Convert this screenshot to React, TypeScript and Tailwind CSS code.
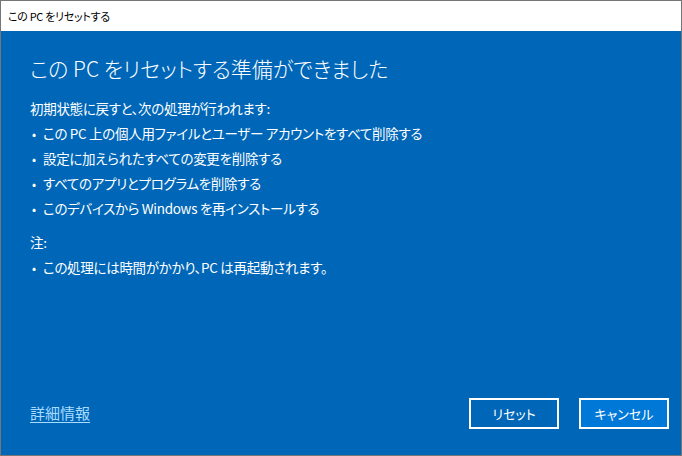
const jp = "font-['Noto_Sans_CJK_JP',sans-serif] [font-feature-settings:'palt']";

const actions = [
  'この PC 上の個人用ファイルとユーザー アカウントをすべて削除する',
  '設定に加えられたすべての変更を削除する',
  'すべてのアプリとプログラムを削除する',
  'このデバイスから Windows を再インストールする',
];

function Bullet({ text }: { text: string }) {
  return (
    <li className="flex h-[25px] items-center">
      <span className="w-[13px] pl-[2px] text-[12px]">•</span>
      <span>{text}</span>
    </li>
  );
}

export default function App() {
  return (
    <div className={`flex h-[456px] w-[682px] flex-col border border-[#767676] bg-[#0067b8] text-white ${jp}`}>
      {/* title bar */}
      <div className="flex h-[30px] shrink-0 items-center bg-white pl-[7px] text-[11px] tracking-[-0.3px] text-black">
        この PC をリセットする
      </div>

      <div className="flex flex-1 flex-col px-[29px]">
        <h1 className="mt-[20px] h-[34px] text-[21px] leading-[34px] font-light">
          この PC をリセットする準備ができました
        </h1>

        <div className="mt-[11px] text-[13.5px] tracking-[-0.3px]">
          <p className="flex h-[25px] items-center">初期状態に戻すと、次の処理が行われます:</p>
          <ul>
            {actions.map((a) => (
              <Bullet key={a} text={a} />
            ))}
          </ul>

          <p className="mt-[9px] flex h-[25px] items-center">注:</p>
          <ul>
            <Bullet text="この処理には時間がかかり、PC は再起動されます。" />
          </ul>
        </div>

        <div className="mt-auto mb-[26px] flex items-center justify-between">
          <a href="#" className="text-[15px] text-[#a8dcff] underline underline-offset-[3px]">
            詳細情報
          </a>
          <div className="-mr-[17px] flex gap-[20px]">
            <button className="flex h-[31px] w-[90px] items-center justify-center border-2 border-white bg-[#0067b8] text-[13px]">
              リセット
            </button>
            <button className="flex h-[31px] w-[90px] items-center justify-center border-2 border-white bg-[#0078d7] text-[13px]">
              キャンセル
            </button>
          </div>
        </div>
      </div>
    </div>
  );
}
